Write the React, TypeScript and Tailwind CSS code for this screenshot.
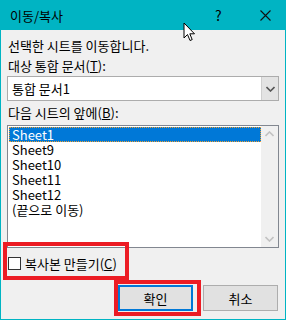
import React from "react";

const sheets = ["Sheet1", "Sheet9", "Sheet10", "Sheet11", "Sheet12", "(끝으로 이동)"];

function Chevron({ up, className }: { up?: boolean; className?: string }) {
  return (
    <svg width="9" height="6" viewBox="0 0 9 6" className={className}>
      <path
        d={up ? "M0.5 5 L4.5 1 L8.5 5" : "M0.5 1 L4.5 5 L8.5 1"}
        fill="none"
        stroke="currentColor"
        strokeWidth="1.6"
      />
    </svg>
  );
}

export default function App() {
  return (
    <div className="relative w-[286px] h-[320px] overflow-hidden bg-[#f0f0f0] border-x border-b border-[#00b4c3] text-[13px] text-black font-['Noto_Sans_CJK_KR',sans-serif]">
      {/* title bar */}
      <div className="h-[30px] bg-[#00b4c3] flex items-center pl-[9px] pr-[14px]">
        <span className="flex-1 leading-none">이동/복사</span>
        <span className="w-[10px] text-[14px] leading-none mr-[35px]">?</span>
        <svg width="11" height="11" viewBox="0 0 11 11">
          <path d="M0.5 0.5 L10.5 10.5 M10.5 0.5 L0.5 10.5" stroke="#111" strokeWidth="1.1" />
        </svg>
      </div>

      <div className="px-[6px]">
        <div className="mt-[8px] h-[16px] leading-[16px] pl-[1px]">선택한 시트를 이동합니다.</div>
        <div className="mt-[4px] h-[16px] leading-[16px] pl-[1px]">
          대상 통합 문서(<span className="underline">T</span>):
        </div>

        {/* combo */}
        <div className="mt-[2px] h-[25px] flex border border-[#acacac] bg-white">
          <div className="flex-1 flex items-center pl-[4px]">통합 문서1</div>
          <div className="w-[17px] bg-[#e3e3e3] border-l border-[#cfcfcf] flex items-center justify-center text-[#555]">
            <Chevron />
          </div>
        </div>

        <div className="mt-[4px] h-[16px] leading-[16px] pl-[1px]">
          다음 시트의 앞에(<span className="underline">B</span>):
        </div>

        {/* list box */}
        <div className="mt-[4px] h-[123px] flex border border-[#828790] bg-white">
          <div className="flex-1 pt-[1px] pl-[1px]">
            {sheets.map((s, i) => (
              <div
                key={s}
                className={
                  i === 0
                    ? "h-[15px] leading-[15px] pl-[3px] bg-[#0078d7] text-white outline outline-1 outline-dotted outline-[#f0a030] -outline-offset-1"
                    : "h-[15px] leading-[15px] pl-[3px]"
                }
              >
                {s}
              </div>
            ))}
          </div>
          <div className="w-[17px] bg-[#f0f0f0] flex flex-col items-center justify-between py-[5px] text-[#c2c2c2]">
            <Chevron up />
            <Chevron />
          </div>
        </div>

        {/* checkbox */}
        <div className="mt-[9px] flex items-center h-[13px] pl-[1px]">
          <div className="w-[13px] h-[13px] border border-[#333] bg-white" />
          <span className="ml-[4px] leading-none">
            복사본 만들기(<span className="underline">C</span>)
          </span>
        </div>

        {/* buttons */}
        <div className="mt-[15px] flex justify-end gap-[10px] pr-[1px]">
          <button className="w-[75px] h-[26px] bg-[#e1e1e1] border-2 border-[#0078d7] leading-none">확인</button>
          <button className="w-[75px] h-[26px] bg-[#e1e1e1] border border-[#adadad] leading-none">취소</button>
        </div>
      </div>

      {/* red highlight boxes */}
      <div className="absolute left-[2px] top-[242px] w-[126px] h-[38px] border-4 border-[#ec1c24]" />
      <div className="absolute left-[113px] top-[280px] w-[87px] h-[36px] border-4 border-[#ec1c24]" />

      {/* mouse cursor */}
      <svg className="absolute left-[182px] top-[22px]" width="13" height="21" viewBox="0 0 13 21">
        <path
          d="M1 1 L1 16 L4.5 12.5 L7 18.5 L9.2 17.6 L6.8 11.8 L11.5 11.8 Z"
          fill="#fff"
          stroke="#000"
          strokeWidth="1"
          strokeLinejoin="miter"
        />
      </svg>
    </div>
  );
}
